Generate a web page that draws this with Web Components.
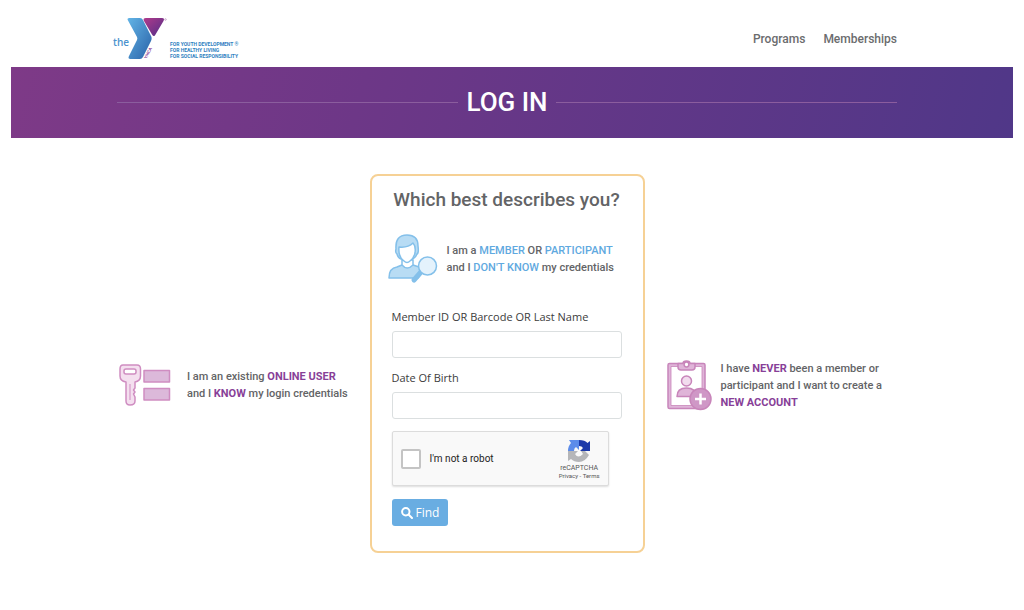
<!DOCTYPE html>
<html lang="en">
<head>
<meta charset="utf-8">
<meta name="viewport" content="width=device-width, initial-scale=1">
<title>Log In</title>
<style>
body{margin:0;background:#fff;color:#636466;font-family:Roboto,"Noto Sans",sans-serif;font-size:11px}
:root{--blue:#5fa9e0;--purple:#883f98}
</style>
</head>
<body>
<login-page></login-page>
<script>
const define=(name,html,init)=>customElements.define(name,class extends HTMLElement{
  constructor(){
    super();
    this.attachShadow({mode:'open'});
    const t=document.createElement('template');
    t.innerHTML=html;
    this.shadowRoot.append(t.content.cloneNode(true));
  }
  connectedCallback(){ if(init) init(this,this.shadowRoot); }
});

define('y-logo',`
<style>
:host{display:block}
a{display:flex;align-items:flex-end;color:#3b7fc0;text-decoration:none}
.the{font:600 10px/16px "Open Sans",sans-serif;color:#4b93ce;margin-bottom:11px;width:17px}
svg{display:block;width:40px;height:44px;overflow:visible}
.tag{font:700 5px/6px Roboto,sans-serif;color:#2f7fbf;margin-bottom:2px}
.tag span{display:block;white-space:nowrap}
</style>
<a href="#"><span class="the">the</span>
<svg viewBox="0 0 40 44" aria-hidden="true">
<defs>
<linearGradient id="b" x1="0" y1="0" x2="1" y2="1"><stop stop-color="#62b4e6"/><stop offset="1" stop-color="#2a62a8"/></linearGradient>
<linearGradient id="p" x1="0" y1="0" x2="1" y2="1"><stop stop-color="#b03a8b"/><stop offset="1" stop-color="#522e87"/></linearGradient>
</defs>
<g transform="translate(-3)">
<path d="M0 3.500Q-1.500 1 1.500 1H12Q14 1 15 3L23.500 20Q24 22 23 24L15 40Q14 42 12 42H2.500Q-.5 42 1 39L9 23Q9.700 21.500 9 20Z" fill="url(#b)" transform="translate(1)"/>
<path d="M19 1H35Q38 1 36.500 4L28.500 17.500Q27 20.500 25 17.500L17 4Q15.500 1 19 1Z" fill="url(#p)"/>
<circle cx="38.500" cy="2.500" r=".8" fill="none" stroke="#a56ba6" stroke-width=".5"/>
<text transform="translate(19.500 42) rotate(-62)" font-family="Lato" font-weight="900" font-size="4" fill="#873f98">YMCA</text>
</g>
</svg>
<span class="tag"><span>FOR YOUTH DEVELOPMENT ®</span><span>FOR HEALTHY LIVING</span><span>FOR SOCIAL RESPONSIBILITY</span></span></a>`);

define('site-header',`
<style>
:host{display:block}
.in{max-width:784px;margin:0 auto;padding-right:14px;height:67px;display:flex;justify-content:space-between;box-sizing:content-box}
y-logo{padding-top:17px}
nav{display:flex;gap:18px;padding-top:31px}
a{color:#6b6c6e;text-decoration:none;font-weight:500;font-size:12px;line-height:16px}
</style>
<header class="in"><y-logo></y-logo><nav><a href="#">Programs</a><a href="#">Memberships</a></nav></header>`);

define('page-banner',`
<style>
:host{display:block;background:linear-gradient(105deg,#7e3a87 0%,#6d3787 35%,#503788 100%);color:#fff}
.in{max-width:780px;margin:0 auto;padding:18px 10px 19px 0;display:flex;align-items:center;gap:8px}
.in::before,.in::after{content:"";flex:1;height:1px;background:#8b5d9e}
h1{margin:0;font:500 26px/34px Roboto,sans-serif}
</style>
<div class="in"><h1><slot></slot></h1></div>`);

define('choice-row',`
<style>
:host{display:flex;align-items:center;line-height:17px;font-weight:500}
p{margin:0;white-space:nowrap}
</style>
<slot name="icon"></slot><p><slot></slot></p>`);

define('user-search-icon',`
<style>:host{display:block}svg{display:block;width:50px;height:50px}</style>
<svg viewBox="0 0 50 50" fill="#b8dcf4" stroke="#84c0ea" stroke-width="1.500" stroke-linejoin="round" aria-hidden="true">
<path d="M1 44Q1 34 9 33L14 31H25L31 33L35 37L30 44Z"/>
<path d="M14 26V31Q19 37 25 31V26Z" fill="#fff"/>
<path d="M9 20Q7 19 8 15Q7 1 19 1Q30 1 30 12Q31 19 29 20Q28 23 25 25H13Q10 24 9 20Z"/>
<path d="M11 13Q20 14 25 9Q28 12 27 19Q26 24 22 27Q19 30 16 27Q10 23 11 13Z" fill="#fff"/>
<path d="M33 38L26 46" stroke-width="5" stroke-linecap="round"/>
<circle cx="39.500" cy="32" r="9" fill="#e4f2fc"/>
</svg>`);

define('key-form-icon',`
<style>:host{display:block}svg{display:block;width:52px;height:42px}</style>
<svg viewBox="0 0 52 42" fill="#f4dfef" stroke="#cf8dc1" stroke-width="1.500" stroke-linejoin="round" aria-hidden="true">
<path d="M4 1H18Q21.500 1 21.500 5V12Q21.500 17 16 18V24L14.500 26L16 28L14.500 30L16 33V37Q16 41 11 41Q7 41 7 37V18Q1 17 1 12V5Q1 1 4 1Z"/>
<rect x="5" y="5" width="12" height="5" rx="2" fill="#fff"/><path d="M11 20V36" stroke-width="1"/>
<g fill="#dcb9da"><rect x="25" y="6.500" width="25.500" height="11.500"/><rect x="25" y="24.500" width="25.500" height="11.500"/></g>
</svg>`);

define('clipboard-icon',`
<style>:host{display:block}svg{display:block;width:46px;height:51px}</style>
<svg viewBox="0 0 46 51" fill="#dfb4d8" stroke="#c885ba" stroke-width="1.500" stroke-linejoin="round" aria-hidden="true">
<rect x="1" y="3.500" width="37" height="45" rx="1.500"/><rect x="4" y="6.500" width="31" height="39" fill="#fff" stroke-width=".8"/>
<path d="M11 3.500H16Q16 1 19.500 1Q23 1 23 3.500H28V7Q28 10 25 10H14Q11 10 11 7Z"/><circle cx="19.500" cy="4.500" r="2.400" fill="#fff"/>
<circle cx="19.500" cy="21" r="5" fill="#f2dcee"/><path d="M10 36.500Q10 28 19.500 28Q29 28 29 36.500Z"/>
<circle cx="33.500" cy="39" r="10.500" fill="#cf97c6"/><path d="M28 39H39M33.500 33.500V44.500" stroke="#fff" stroke-width="2.500"/>
</svg>`);

define('captcha-box',`
<style>
:host{display:flex;box-sizing:border-box;width:217px;max-width:100%;height:55px;border:1px solid #dcdcdc;border-radius:2px;background:#f9f9f9;box-shadow:0 1px 2px #0002;align-items:center;justify-content:space-between;padding:0 8px;font-family:Roboto,sans-serif;color:#222}
label{display:flex;align-items:center;gap:9px;font-size:10px}
input{appearance:none;width:20px;height:20px;margin:0;border:2px solid #c4c4c4;border-radius:2px;background:#fff;box-sizing:border-box}
.brand{text-align:center;font-size:7px;line-height:8px;color:#555;padding-top:2px}
svg{display:block;width:24px;height:24px;margin:0 auto 1px}
.links{font-size:6px;color:#555}
a{color:inherit;text-decoration:none}
</style>
<label><input type="checkbox">I'm not a robot</label>
<div class="brand"><svg viewBox="0 0 24 24" aria-hidden="true">
<path d="M12 1Q18 1 20.500 4L23 2V12H13L16 9Q15 7 12 7Z" fill="#1c3aa9"/>
<path d="M1 12Q1 7 4 4L2 1H12V11L9 8Q7 9 7 12Z" fill="#5c8cea"/>
<path d="M1 12H11L8 15Q11 20 16 15L14 12H18L22 16Q18 23 12 23Q7 23 4 20L1 22Z" fill="#b5b6b9"/></svg>
reCAPTCHA<div class="links"><a href="#">Privacy</a> - <a href="#">Terms</a></div></div>`);

define('text-field',`
<style>
:host{display:block}
label{display:block;font:11px/16px "Open Sans",sans-serif;color:#3c3c3c;margin-bottom:6px;white-space:nowrap}
input{display:block;box-sizing:border-box;width:100%;height:27px;border:1px solid #dbdfe0;border-radius:3px;background:#fff;padding:4px 8px;font:12px "Open Sans",sans-serif}
</style>
<label for="f"></label><input id="f" type="text">`,
(el,root)=>{root.querySelector('label').textContent=el.getAttribute('label')});

define('find-button',`
<style>
:host{display:block}
button{display:flex;align-items:center;gap:3px;height:27px;padding:0 9px;border:0;border-radius:3px;background:#69ade2;color:#fff;font:12px "Open Sans",sans-serif}
svg{width:12px;height:12px}
</style>
<button type="submit"><svg viewBox="0 0 12 12" fill="none" stroke="#fff" stroke-width="2" stroke-linecap="round" aria-hidden="true"><circle cx="4.800" cy="4.800" r="3.700"/><path d="M7.800 7.800L11 11"/></svg><slot></slot></button>`);

define('lookup-card',`
<style>
:host{display:block;box-sizing:border-box;border:2px solid #f6d195;border-radius:8px;padding:10px 21px 25px 20px}
h2{margin:0 0 20px;text-align:center;white-space:nowrap;font:500 19px/28px Roboto,sans-serif;color:#636466}
choice-row{margin:0 0 25px -4px}
user-search-icon{margin-right:9px}
text-field{margin-bottom:12px}
captcha-box{margin-bottom:13px}
b{font-weight:500;color:var(--blue)}
</style>
<h2>Which best describes you?</h2>
<choice-row><user-search-icon slot="icon"></user-search-icon>I am a <b>MEMBER</b> OR <b>PARTICIPANT</b><br>and I <b>DON'T KNOW</b> my credentials</choice-row>
<form><text-field label="Member ID OR Barcode OR Last Name"></text-field><text-field label="Date Of Birth"></text-field>
<captcha-box></captcha-box><find-button>Find</find-button></form>`);

define('login-page',`
<style>
:host{display:block;padding:0 11px}
main{display:grid;grid-template-columns:1fr 275px 1fr;align-items:center;max-width:780px;margin:0 auto;padding:36px 10px 48px 0}
.side{padding-top:43px}
key-form-icon{margin:0 16px 0 2px}
.new{padding-left:22px}
clipboard-icon{margin-right:8px}
b{font-weight:700;color:var(--purple)}
</style>
<site-header></site-header>
<page-banner>LOG IN</page-banner>
<main>
<choice-row class="side"><key-form-icon slot="icon"></key-form-icon>I am an existing <b>ONLINE USER</b><br>and I <b>KNOW</b> my login credentials</choice-row>
<lookup-card></lookup-card>
<choice-row class="side new"><clipboard-icon slot="icon"></clipboard-icon>I have <b>NEVER</b> been a member or<br>participant and I want to create a<br><b>NEW ACCOUNT</b></choice-row>
</main>`);
</script>
</body>
</html>
